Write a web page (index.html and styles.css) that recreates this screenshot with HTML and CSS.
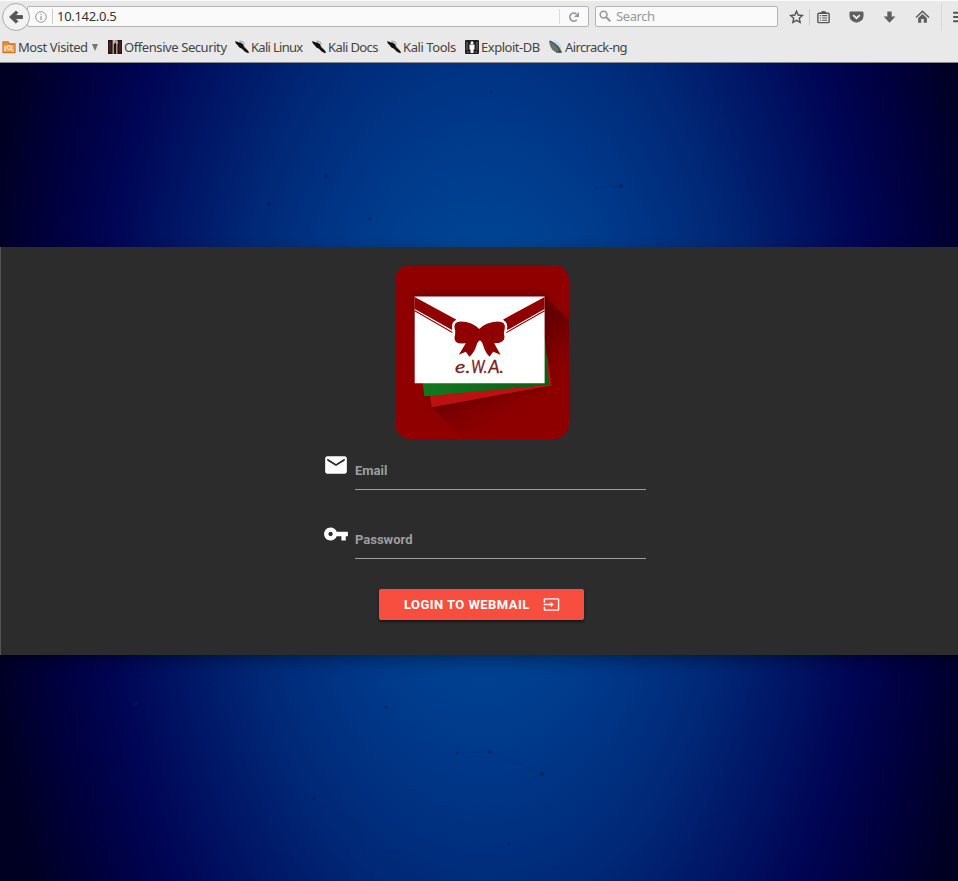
FILE: index.html
```html
<!DOCTYPE html>
<html lang="en">
<head>
<meta charset="utf-8">
<title>Webmail login</title>
<link rel="stylesheet" href="styles.css">
</head>
<body>
<svg class="defs" aria-hidden="true">
  <symbol id="dragon" viewBox="0 0 16 16"><path d="M0 1l4 1.500 3 .5 2.500 2 1 3 3 2.500L16 14l-1 1-4-2-3-3-3-1.500L3 6 1 4z" fill="#111"/><path d="M5 1q5 0 6 4M10 7l3 4" stroke="#666" fill="none" stroke-width=".7"/></symbol>
</svg>
<header class="chrome">
  <div class="toolbar">
    <button class="back" aria-label="Back"><svg viewBox="0 0 28 28"><path d="M7 14l7-6.5 2 2-3 3h8v3.200h-8l3 3-2 2z" fill="#555" stroke="#555"/></svg></button>
    <div class="address">
      <svg class="info" viewBox="0 0 12 12"><circle cx="6" cy="6" r="5.3" fill="none" stroke="#999"/><path d="M6 5v4M6 2.800v1.300" stroke="#888"/></svg>
      <span class="url">10.142.0.5</span>
      <span class="reload"><svg viewBox="0 0 12 12"><path d="M8.800 8.800A4 4 0 1 1 8.400 3" fill="none" stroke="#8d99a5" stroke-width="1.700"/><path d="M11 1v5H6z" fill="#8d99a5"/></svg></span>
    </div>
    <div class="search"><svg viewBox="0 0 12 12"><circle cx="4.600" cy="4.600" r="3.400" fill="none" stroke="#999" stroke-width="1.600"/><path d="M7 7l4.300 4.300" stroke="#999" stroke-width="2"/></svg><span>Search</span></div>
    <div class="tools">
      <svg viewBox="0 0 16 16"><path d="M8 1.800l1.800 4.100 4.500.5-3.300 3 .9 4.400L8 11.600l-3.900 2.200.9-4.400-3.300-3 4.500-.5z" fill="none" stroke="#555" stroke-width="1.500"/></svg>
      <i class="rule"></i>
      <svg class="clip" viewBox="0 0 16 16"><rect x="2" y="4" width="12" height="10" rx="1" fill="#eee" stroke="#555" stroke-width="1.500"/><path d="M5 4l1-1.500h1L8 1.500l1 1h1L11 4z" fill="#555" stroke="#555"/><path d="M4 6.500h1.500M6.500 6.500H12M4 9h1.500M6.500 9H12M4 11.500h1.500M6.500 11.500H12" stroke="#555" stroke-width="1.200"/></svg>
      <svg class="pocket" viewBox="0 0 16 16"><path d="M2 2h12q1.500 0 1.500 1.500V7Q15 13 8 14 1 13 .5 7V3.500Q.5 2 2 2z" fill="#606060"/><path d="M4.500 6L8 9.300 11.500 6" fill="none" stroke="#eee" stroke-width="1.900"/></svg>
      <svg class="down" viewBox="0 0 16 16"><path d="M5.700 2h4.600v5.500h4L8 14 1.700 7.500h4z" fill="#606060"/></svg>
      <svg class="home" viewBox="0 0 16 16"><path d="M1 8.500L8 2l7 6.500" fill="none" stroke="#606060" stroke-width="1.600"/><path d="M3.300 9L8 4.800 12.700 9v5H9.300v-4H6.700v4H3.300z" fill="#606060"/></svg>
      <i class="rule tall"></i>
      <svg class="burger" viewBox="0 0 16 16"><path d="M2 3.500h12M2 8h12M2 12.500h12" stroke="#555" stroke-width="2" stroke-linecap="round"/></svg>
    </div>
  </div>
  <nav class="bookmarks">
    <a class="visited"><svg viewBox="0 0 14 14"><path d="M1 2h5l1.500 2H13v8.500H1z" fill="#f5a55b" stroke="#d9771d" stroke-width="1.300"/><path d="M1 4h12" stroke="#d9771d"/><circle cx="7.300" cy="7.600" r="2" fill="none" stroke="#fff"/><path d="M8.800 9l2.500 2.700M3 11V6.500" stroke="#fff"/></svg><span>Most Visited</span><b class="caret"></b></a>
    <a class="offensive"><svg viewBox="0 0 14 14"><path d="M0 0h14v14H0z" fill="#24191a"/><path d="M4.500 0h5v14h-5z" fill="#b08a85"/><path d="M7 3v11" stroke="#191414" stroke-width="2"/><path d="M2 2v10M12 2v10" stroke="#6e2b2b"/><path d="M6 0v4M9 1v3" stroke="#ddd"/></svg><span>Offensive Security</span></a>
    <a class="linux"><svg><use href="#dragon"/></svg><span>Kali Linux</span></a>
    <a class="docs"><svg><use href="#dragon"/></svg><span>Kali Docs</span></a>
    <a class="kalitools"><svg><use href="#dragon"/></svg><span>Kali Tools</span></a>
    <a class="exploit"><svg viewBox="0 0 14 14"><rect width="14" height="14" rx="1" fill="#202020"/><circle cx="7" cy="2.800" r="1.500" fill="#fff"/><path d="M4.500 4.500h5v5h-1V13h-3V9.500h-1z" fill="#fff"/><path d="M2 2v8M12 2v8M2 12h2M10 12h2" stroke="#777"/></svg><span>Exploit-DB</span></a>
    <a class="aircrack"><svg viewBox="0 0 14 14"><path d="M3 0q9 0 10 10z" fill="#c9dcfa"/><path d="M0 1Q1 0 4 2q6 3 8.500 9 .5 2-2 2Q1 12 0 1z" fill="#68736a"/><path d="M1 1q8 4 10 11M7 12h6" stroke="#3d443f" fill="none"/></svg><span>Aircrack-ng</span></a>
  </nav>
</header>
<main class="page">
  <svg class="specks" viewBox="0 0 958 818" aria-hidden="true"><g fill="#001b50" opacity=".6"><circle cx="269" cy="141" r="2"/><circle cx="326" cy="113" r="2"/><circle cx="621" cy="123" r="2"/><circle cx="596" cy="125" r="1.200"/><circle cx="370" cy="156" r="1.500"/><circle cx="491" cy="29" r="1.500"/><circle cx="490" cy="689" r="2"/><circle cx="457" cy="690" r="1.500"/><circle cx="542" cy="711" r="2.300"/><circle cx="314" cy="736" r="2"/><circle cx="386" cy="644" r="1.500"/><circle cx="136" cy="641" r="2"/><circle cx="210" cy="620" r="1.500"/><circle cx="509" cy="781" r="1.500"/></g><path d="M596 125l25-2M457 690l33-1 52 22M314 736l42 25 10 32" fill="none" stroke="#001b50" opacity=".15"/></svg>
  <section class="panel">
    <svg class="logo" viewBox="31 30 521 521">
      <defs>
        <clipPath id="tile"><rect x="31" y="30" width="521" height="521" rx="45"/></clipPath>
        <linearGradient id="cast" gradientUnits="userSpaceOnUse" x1="310" y1="290" x2="430" y2="470"><stop offset=".1" stop-color="#580000" stop-opacity=".75"/><stop offset="1" stop-color="#800" stop-opacity=".2"/></linearGradient>
        <linearGradient id="green"><stop stop-color="#127920"/><stop offset="1" stop-color="#0c5d17"/></linearGradient>
        <filter id="soft" x="-20%" y="-20%" width="140%" height="140%"><feGaussianBlur stdDeviation="12"/></filter>
      </defs>
      <g clip-path="url(#tile)">
        <path d="M31 30h521v521H31z" fill="#900000"/>
        <path d="M480 124l72 70v357H237l-96-96z" fill="url(#cast)"/>
        <path d="M85 120h400v274L142 450z" fill="#500" opacity=".7" filter="url(#soft)"/>
        <path d="M130 380l356-80 14 91-359 65z" fill="#bd1011"/>
        <path d="M112 370l368-120 13 139-374 34z" fill="url(#green)"/>
        <path d="M90 124h389v260H90z" fill="#fff"/>
        <path d="M90 126l124 67-12 32L90 162zM479 126l-124 67 12 32 112-63z" fill="#900000"/>
        <path d="M90 167l113 65M479 167l-116 66" stroke="#900000" stroke-width="3"/>
        <path d="M285 223Q262 199 228 199q-22 0-19 20 5 12 0 27-1 19 22 19l12-1-21 35 21-9 11 15q16-15 22-38 5-11 9-11t9 11q6 23 20 38l11-15 22 9-19-35q30 0 31-18-4-13 1-28 2-19-21-19-37 2-58 24z" fill="#900000" stroke="#fff" stroke-width="14" paint-order="stroke"/>
        <g class="initials"><text x="211" y="354" textLength="46" lengthAdjust="spacingAndGlyphs">e.</text><text x="259" y="354" textLength="48" lengthAdjust="spacingAndGlyphs">W.</text><text x="310" y="354" textLength="47" lengthAdjust="spacingAndGlyphs">A.</text></g>
      </g>
    </svg>
    <form class="login">
      <label class="field"><svg viewBox="0 0 24 24"><path d="M20 4H4c-1.100 0-1.990.9-1.990 2L2 18c0 1.100.9 2 2 2h16c1.100 0 2-.9 2-2V6c0-1.100-.9-2-2-2zm0 4l-8 5-8-5V6l8 5 8-5v2z"/></svg><span>Email</span></label>
      <label class="field"><svg viewBox="0 0 24 24"><path d="M12.650 10C11.830 7.670 9.610 6 7 6c-3.310 0-6 2.690-6 6s2.690 6 6 6c2.610 0 4.830-1.670 5.650-4H17v4h4v-4h2v-4H12.650zM7 14c-1.100 0-2-.9-2-2s.9-2 2-2 2 .9 2 2-.9 2-2 2z"/></svg><span>Password</span></label>
      <button class="submit" type="button"><span>LOGIN TO WEBMAIL</span><svg viewBox="0 0 24 24"><path d="M21 3.010H3c-1.100 0-2 .9-2 2V9h2V4.990h18v14.030H3V15H1v4.010c0 1.100.9 1.980 2 1.980h18c1.100 0 2-.88 2-1.980v-14c0-1.110-.9-2-2-2zM11 16l4-4-4-4v3H1v2h10v3z"/></svg></button>
    </form>
  </section>
</main>
</body>
</html>
```
FILE: styles.css
```css
* { box-sizing: border-box; }
body { margin: 0; width: 958px; height: 881px; overflow: hidden; font-family: "Noto Sans", sans-serif; }
svg { display: block; flex: none; }
.defs { position: absolute; width: 0; height: 0; }
button { font: inherit; padding: 0; border: 0; }
.chrome { height: 63px; overflow: hidden; background: #e9e9e9; border-top: 1px solid #fafafa; border-bottom: 1px solid #888; color: #444; font-size: 13px; letter-spacing: -.42px; }
.toolbar { height: 31px; display: flex; align-items: center; padding-left: 2px; }
.back { flex: none; width: 28px; height: 28px; border: 1px solid #aaa; border-radius: 50%; background: #f3f3f3; z-index: 1; }
.back svg { width: 26px; height: 26px; }
.address { flex: none; width: 562px; height: 21px; margin-left: -3px; padding-left: 7px; display: flex; align-items: center; border: 1px solid #b3b3b3; border-radius: 2px; background: #fafafa; }
.info { width: 12px; height: 12px; }
.url { margin-left: 5px; padding-left: 4px; border-left: 1px solid #ccc; line-height: 15px; color: #333; letter-spacing: -.3px; }
.reload { margin-left: auto; width: 29px; height: 15px; border-left: 1px solid #ddd; display: flex; align-items: center; justify-content: center; }
.reload svg { width: 12px; height: 12px; }
.search { flex: none; width: 183px; height: 21px; margin-left: 6px; padding-left: 3px; display: flex; align-items: center; gap: 5px; border: 1px solid #b3b3b3; border-radius: 2px; background: #fafafa; color: #999; line-height: 17px; padding-bottom: 1px; }
.search svg { width: 12px; height: 12px; }
.tools { flex: none; height: 30px; display: flex; align-items: center; margin-left: 11px; }
.tools svg { width: 15px; height: 16px; }
.rule { height: 16px; border-left: 1px solid #ccc; margin: 0 6px 0 5px; }
.tools .pocket { margin-left: 18px; }
.tools .down { margin-left: 18px; }
.tools .home { margin-left: 18px; }
.tools .tall { height: 28px; margin: 0 10px 0 11px; border-color: #d8d8d8; }
.bookmarks { display: flex; align-items: center; height: 30px; padding: 0 0 0 2px; white-space: nowrap; }
.bookmarks a { flex: none; display: flex; align-items: center; gap: 2px; }
.bookmarks svg { width: 14px; height: 14px; }
.bookmarks .visited { width: 106px; }
.bookmarks .offensive { width: 127px; }
.bookmarks .linux { width: 77px; letter-spacing: -.7px; }
.bookmarks .docs { width: 75px; letter-spacing: -.6px; }
.bookmarks .kalitools { width: 78px; }
.bookmarks .exploit { width: 84px; letter-spacing: -.48px; }
.bookmarks .aircrack { letter-spacing: -.62px; }
.caret { margin-left: 2px; border: 3.5px solid transparent; border-top: 7px solid #777; border-bottom: 0; }
.page { position: relative; height: 818px; padding-top: 184px; background: radial-gradient(ellipse 500px 920px at 485px 377px, #004fa2 0%, #004797 18%, #003788 36%, #002876 52%, #001262 68%, #000554 78%, #00003e 90%, #000023 102%); }
.specks { position: absolute; inset: 0; width: 958px; height: 818px; }
.panel { position: relative; height: 408px; padding: 18px 0 0 5px; background: #2c2c2c; border-left: 1px solid #555; box-shadow: 0 6px 14px rgba(0,0,0,.35); display: flex; flex-direction: column; align-items: center; }
.logo { width: 174px; height: 174px; }
.initials { font: italic 49px "Lato", sans-serif; fill: #742326; stroke: #742326; stroke-width: .8px; }
.login { width: 323px; margin: 11px 0 0 5px; display: flex; flex-direction: column; align-items: flex-start; font-family: Roboto, sans-serif; }
.field { width: 323px; height: 69px; display: flex; gap: 6px; color: #9e9e9e; font-size: 13px; font-weight: 700; }
.field svg { width: 26px; height: 26px; margin-top: 2px; fill: #fff; }
.field span { width: 291px; height: 40px; padding-top: 13px; line-height: 16px; border-bottom: 1px solid #9e9e9e; }
.submit { width: 205px; height: 31px; margin: 1px 0 0 56px; display: flex; align-items: center; padding-left: 25px; background: #f84e40; color: #fff; border-radius: 2px; font-size: 13px; font-weight: 700; letter-spacing: .45px; box-shadow: 0 2px 3px rgba(0,0,0,.5); }
.submit svg { width: 17px; height: 17px; margin-left: 13px; fill: #fff; }
```
